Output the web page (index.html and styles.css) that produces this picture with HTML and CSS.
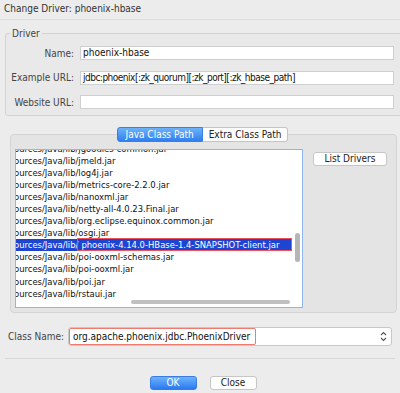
FILE: index.html
```html
<!DOCTYPE html>
<html lang="en">
<head>
    <meta charset="UTF-8">
    <title>Change Driver</title>
    <link rel="stylesheet" href="styles.css">
</head>
<body>
    <div class="title">Change Driver: phoenix-hbase</div>

    <fieldset class="driver">
        <legend>Driver</legend>
        <div class="field">
            <label>Name:</label>
            <div class="input">phoenix-hbase</div>
        </div>
        <div class="field">
            <label>Example URL:</label>
            <div class="input url">jdbc:phoenix[:zk_quorum][:zk_port][:zk_hbase_path]</div>
        </div>
        <div class="field">
            <label>Website URL:</label>
            <div class="input"></div>
        </div>
    </fieldset>

    <div class="tabbox">
        <div class="tabs">
            <span class="tab selected">Java Class Path</span>
            <span class="tab">Extra Class Path</span>
        </div>
        <div class="panel">
            <div class="list">
                <div class="rows">
                    <div class="row">ources/Java/lib/jgoodies-common.jar</div>
                    <div class="row">ources/Java/lib/jmeld.jar</div>
                    <div class="row">ources/Java/lib/log4j.jar</div>
                    <div class="row">ources/Java/lib/metrics-core-2.2.0.jar</div>
                    <div class="row">ources/Java/lib/nanoxml.jar</div>
                    <div class="row">ources/Java/lib/netty-all-4.0.23.Final.jar</div>
                    <div class="row">ources/Java/lib/org.eclipse.equinox.common.jar</div>
                    <div class="row">ources/Java/lib/osgi.jar</div>
                    <div class="row sel"><span class="dir">ources/Java/lib/</span><span class="mark">phoenix-4.14.0-HBase-1.4-SNAPSHOT-client.jar</span></div>
                    <div class="row">ources/Java/lib/poi-ooxml-schemas.jar</div>
                    <div class="row">ources/Java/lib/poi-ooxml.jar</div>
                    <div class="row">ources/Java/lib/poi.jar</div>
                    <div class="row">ources/Java/lib/rstaui.jar</div>
                </div>
                <div class="vthumb"></div>
                <div class="hthumb"></div>
            </div>
            <div class="side">
                <button class="btn">List Drivers</button>
            </div>
        </div>
    </div>

    <div class="classrow">
        <label>Class Name:</label>
        <div class="combo">
            <span class="value">org.apache.phoenix.jdbc.PhoenixDriver</span>
            <svg class="stepper" width="7" height="11" viewBox="0 0 7 11">
                <path d="M1 4 L3.5 1.5 L6 4 M1 7 L3.5 9.5 L6 7" fill="none" stroke="#555" stroke-width="1.1"/>
            </svg>
        </div>
    </div>

    <div class="footer">
        <button class="btn primary">OK</button>
        <button class="btn">Close</button>
    </div>
</body>
</html>
```

FILE: styles.css
```css
body {
    margin: 0;
    width: 400px;
    height: 393px;
    overflow: hidden;
    background: #ececec;
    font-family: "DejaVu Sans Condensed", "DejaVu Sans", sans-serif;
    font-size: 10px;
    color: #222;
}

.title {
    height: 19px;
    line-height: 18px;
    padding-left: 4px;
    border-bottom: 1px solid #dcdcdc;
    color: #333;
}

.driver {
    margin: 8px -8px 0 5px;
    padding: 2px 8px 0 0;
    border: 1px solid #d2d2d2;
    border-radius: 3px;
    background: #e9e9e9;
}

.driver legend {
    padding: 0 2px;
    margin-left: 4px;
    color: #444;
}

.field {
    display: flex;
    align-items: center;
    height: 24.5px;
}

.field label {
    width: 68px;
    text-align: right;
    color: #444;
    white-space: nowrap;
}

.input {
    margin-left: 6px;
    width: 308px;
    height: 12px;
    line-height: 12px;
    padding: 0 2px;
    background: #fff;
    border: 1px solid #cfcfcf;
    color: #111;
    white-space: nowrap;
}

.input.url {
    letter-spacing: -0.5px;
}

.tabbox {
    margin: 11px 3px 0 10px;
}

.tabs {
    display: flex;
    justify-content: center;
    position: relative;
    z-index: 1;
    height: 14px;
    margin-right: 2px;
}

.tab {
    height: 13px;
    line-height: 13px;
    padding: 0 6px;
    background: #fdfdfd;
    border: 1px solid #c4c4c4;
    border-left: none;
    border-radius: 0 3px 3px 0;
    color: #222;
    white-space: nowrap;
}

.tab.selected {
    background: linear-gradient(#6cb2fa, #2f7ff0);
    border: 1px solid #3b7fe0;
    border-radius: 3px 0 0 3px;
    color: #fff;
    padding: 0 8px;
}

.panel {
    display: flex;
    margin-top: -7px;
    height: 163px;
    padding: 14px 0 0 4px;
    background: #e4e4e4;
    border: 1px solid #d4d4d4;
    border-radius: 4px;
}

.list {
    position: relative;
    width: 286px;
    height: 157px;
    background: #fff;
    border: 1px solid #8db6ec;
    overflow: hidden;
}

.rows {
    margin-top: -7px;
    width: 276px;
    overflow: hidden;
}

.row {
    height: 12.1px;
    line-height: 12px;
    font-size: 9.4px;
    white-space: nowrap;
    text-indent: -2px;
    color: #111;
}

.row.sel {
    display: flex;
    background: #1d45d2;
    color: #fff;
    text-indent: 0;
}

.row.sel .dir {
    margin-left: -2px;
}

.mark {
    flex: 1;
    height: 11px;
    line-height: 11px;
    margin-right: 1px;
    padding: 0 3px;
    outline: 1px solid #f0505a;
}

.vthumb {
    position: absolute;
    left: 279px;
    top: 83px;
    width: 5px;
    height: 29px;
    border-radius: 3px;
    background: #b5b5b5;
}

.hthumb {
    position: absolute;
    left: 115px;
    top: 150px;
    width: 159px;
    height: 4px;
    border-radius: 3px;
    background: #c0c0c0;
}

.side {
    padding: 3px 0 0 10px;
}

.btn {
    font-family: inherit;
    font-size: 10px;
    height: 14px;
    line-height: 12px;
    padding: 0;
    background: #fefefe;
    border: 1px solid #c6c6c6;
    border-radius: 3px;
    color: #222;
}

.side .btn {
    width: 74px;
}

.classrow {
    display: flex;
    align-items: center;
    margin: 14px 0 0 8px;
}

.classrow label {
    width: 60px;
    color: #444;
    white-space: nowrap;
}

.combo {
    display: flex;
    align-items: center;
    justify-content: space-between;
    width: 322px;
    height: 17px;
    background: #fff;
    border: 1px solid #c8c8c8;
    border-radius: 3px;
}

.value {
    width: 182px;
    height: 15px;
    line-height: 15px;
    padding-left: 3px;
    border: 1px solid #f07a6e;
    border-radius: 2px;
    color: #111;
    white-space: nowrap;
}

.stepper {
    margin-right: 4px;
}

.footer {
    display: flex;
    justify-content: center;
    gap: 13px;
    margin: 12px 5px 0 5px;
    padding: 17px 0 0 6px;
    border-top: 1px solid #d6d6d6;
}

.footer .btn {
    width: 47px;
}

.btn.primary {
    background: linear-gradient(#6db3fb, #2a7aef);
    border-color: #3a7ce2;
    color: #fff;
}
```
